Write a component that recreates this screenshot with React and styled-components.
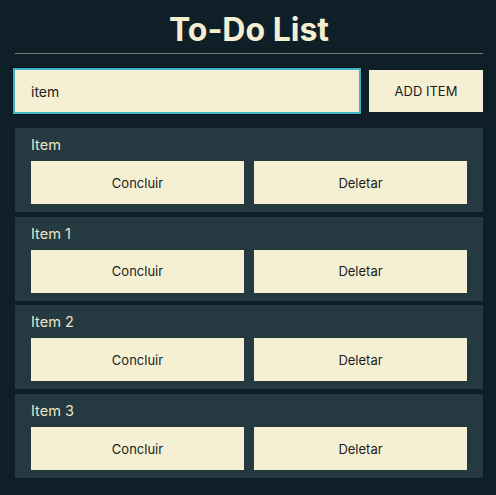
import { useState } from "react";
import styled, { createGlobalStyle } from "styled-components";

const GlobalStyle = createGlobalStyle`
  body {
    margin: 0;
    background-color: #0e1f28;
    font-family: Inter, "Noto Sans", sans-serif;
  }
`;

const Page = styled.div`
  width: 468px;
  padding: 10px 13px 0 15px;
`;

const Header = styled.h1`
  margin: 0;
  padding-bottom: 4px;
  border-bottom: 1px solid #6f7f7e;
  color: #f5efd2;
  font-size: 32px;
  font-weight: 700;
  line-height: 39px;
  text-align: center;
`;

const Form = styled.form`
  display: flex;
  gap: 10px;
  margin: 16px 0;
`;

const Input = styled.input`
  flex: 1;
  height: 42px;
  box-sizing: border-box;
  padding: 0 16px;
  border: none;
  outline: none;
  background-color: #f5f0d3;
  box-shadow: 0 0 0 2px #3db4c5, 0 0 0 3px #061218;
  color: #1c1c1c;
  font-family: inherit;
  font-size: 14px;
`;

const AddButton = styled.button`
  width: 114px;
  height: 42px;
  border: none;
  background-color: #f5f0d3;
  color: #1c1c1c;
  font-family: inherit;
  font-size: 13px;
  cursor: pointer;
`;

const List = styled.ul`
  display: flex;
  flex-direction: column;
  gap: 4.7px;
  margin: 0;
  padding: 0;
  list-style: none;
`;

const Card = styled.li`
  padding: 8px 16px;
  background-color: #253940;
`;

const Label = styled.div`
  margin-bottom: 7px;
  color: #ebe5ca;
  font-size: 14.5px;
  line-height: 18px;
`;

const Actions = styled.div`
  display: grid;
  grid-template-columns: 1fr 1fr;
  gap: 10px;
`;

const ActionButton = styled.button`
  height: 43px;
  border: none;
  background-color: #f5f0d3;
  color: #1c1c1c;
  font-family: inherit;
  font-size: 13px;
  cursor: pointer;
`;

export default function App() {
  const [value, setValue] = useState("item");
  const [items, setItems] = useState(["Item", "Item 1", "Item 2", "Item 3"]);

  const addItem = (e) => {
    e.preventDefault();
    if (!value.trim()) return;
    setItems([...items, value]);
    setValue("");
  };

  return (
    <>
      <GlobalStyle />
      <Page>
        <Header>To-Do List</Header>
        <Form onSubmit={addItem}>
          <Input value={value} onChange={(e) => setValue(e.target.value)} />
          <AddButton type="submit">ADD ITEM</AddButton>
        </Form>
        <List>
          {items.map((item, i) => (
            <Card key={i}>
              <Label>{item}</Label>
              <Actions>
                <ActionButton>Concluir</ActionButton>
                <ActionButton onClick={() => setItems(items.filter((_, j) => j !== i))}>
                  Deletar
                </ActionButton>
              </Actions>
            </Card>
          ))}
        </List>
      </Page>
    </>
  );
}
